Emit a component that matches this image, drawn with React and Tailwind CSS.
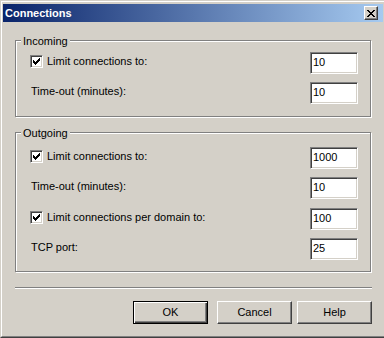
import React from 'react'

const sunken = 'border border-t-[#808080] border-l-[#808080] border-b-white border-r-white shadow-[inset_1px_1px_0_#404040,inset_-1px_-1px_0_#d4d0c8]'
const raised = 'border border-t-white border-l-white border-b-[#404040] border-r-[#404040] shadow-[inset_-1px_-1px_0_#808080]'

const CheckMark = () => (
  <svg width="7" height="7" viewBox="0 0 7 7" shapeRendering="crispEdges" fill="#000">
    <path d="M6 0h1v1h-1z M5 1h2v1h-2z M0 2h1v1h-1z M4 2h3v1h-3z M0 3h2v1h-2z M3 3h3v1h-3z M0 4h5v1h-5z M1 5h3v1h-3z M2 6h1v1h-1z" />
  </svg>
)

const CloseGlyph = () => (
  <svg width="8" height="7" viewBox="0 0 8 7" shapeRendering="crispEdges" fill="#000">
    <path d="M0 0h2v1h-2z M6 0h2v1h-2z M1 1h2v1h-2z M5 1h2v1h-2z M2 2h4v1h-4z M3 3h2v1h-2z M2 4h4v1h-4z M1 5h2v1h-2z M5 5h2v1h-2z M0 6h2v1h-2z M6 6h2v1h-2z" />
  </svg>
)

const Checkbox = () => (
  <span className={`flex items-center justify-center w-[13px] h-[13px] bg-white ${sunken}`}>
    <CheckMark />
  </span>
)

function Group({ title, className = '', children }) {
  return (
    <div className={`relative w-[356px] border border-[#808080] shadow-[inset_1px_1px_0_#fff,1px_1px_0_#fff] pl-[14px] pr-[12px] ${className}`}>
      <span className="absolute -top-[6px] left-[5px] px-[2px] bg-[#d4d0c8] leading-[13px]">{title}</span>
      {children}
    </div>
  )
}

function Row({ label, checked, value, className = '' }) {
  return (
    <div className={`flex items-center justify-between h-[22px] ${className}`}>
      <div className="flex items-center gap-[4px] pb-[3px]">
        {checked ? <Checkbox /> : null}
        <span className={`leading-[13px] ${checked ? '' : 'pl-[1px]'}`}>{label}</span>
      </div>
      <input
        readOnly
        defaultValue={value}
        className={`w-[48px] h-[22px] bg-white pl-[2px] pt-0 pb-[3px] text-[11px] leading-[13px] text-black outline-none ${sunken}`}
      />
    </div>
  )
}

function Button({ children, isDefault }) {
  const frame = isDefault
    ? 'border border-black shadow-[inset_1px_1px_0_#fff,inset_-1px_-1px_0_#404040,inset_-2px_-2px_0_#808080]'
    : raised
  return (
    <button className={`flex items-center justify-center w-[75px] h-[23px] pb-[1px] bg-[#d4d0c8] leading-[13px] ${frame}`}>
      {children}
    </button>
  )
}

export default function App() {
  return (
    <div className="flex w-[384px] h-[338px] overflow-hidden bg-black font-['Liberation_Sans',Arial,sans-serif] text-[11px] text-black">
      {/* desktop peeking out on the left */}
      <div className="w-[1px] h-full bg-[linear-gradient(to_bottom,#c8b060_0,#c8b060_16px,#000_16px,#000_230px,#3a8ee0_230px,#3a8ee0_290px,#000_290px)]" />

      <div className="flex-1 flex flex-col border-t border-l border-b border-t-[#d4d0c8] border-l-[#d4d0c8] border-b-[#404040] bg-[#d4d0c8]">
        <div className="flex-1 flex flex-col border-t border-l border-b border-t-white border-l-white border-b-[#808080] pt-[2px] pl-[1px] pb-[2px]">

          {/* ── Title bar ── */}
          <div className="flex items-center w-[380px] h-[18px] bg-[linear-gradient(to_right,#0a246a,#a6caf0)]">
            <span className="pl-[2px] font-bold text-white leading-[13px]">Connections</span>
            <button className={`ml-auto mr-[5px] flex items-center justify-center w-[14px] h-[14px] bg-[#d4d0c8] ${raised}`}>
              <CloseGlyph />
            </button>
          </div>

          {/* ── Body ── */}
          <div className="flex-1 flex flex-col px-[12px]">
            <Group title="Incoming" className="mt-[18px] pt-[11px] pb-[12px]">
              <div className="flex flex-col gap-[8px]">
                <Row checked label="Limit connections to:" value="10" />
                <Row label="Time-out (minutes):" value="10" />
              </div>
            </Group>

            <Group title="Outgoing" className="mt-[15px] pt-[14px] pb-[11px]">
              <Row checked label="Limit connections to:" value="1000" />
              <Row label="Time-out (minutes):" value="10" className="mt-[8px]" />
              <Row checked label="Limit connections per domain to:" value="100" className="mt-[9px]" />
              <Row label="TCP port:" value="25" className="mt-[8px]" />
            </Group>

            <div className="mt-[15px] w-[357px] h-[2px] border-t border-b border-t-[#808080] border-b-white" />

            <div className="mt-[12px] w-[357px] flex justify-end gap-[5px]">
              <div className="mr-[4px]">
                <Button isDefault>OK</Button>
              </div>
              <Button>Cancel</Button>
              <Button>Help</Button>
            </div>
          </div>
        </div>
      </div>
    </div>
  )
}
